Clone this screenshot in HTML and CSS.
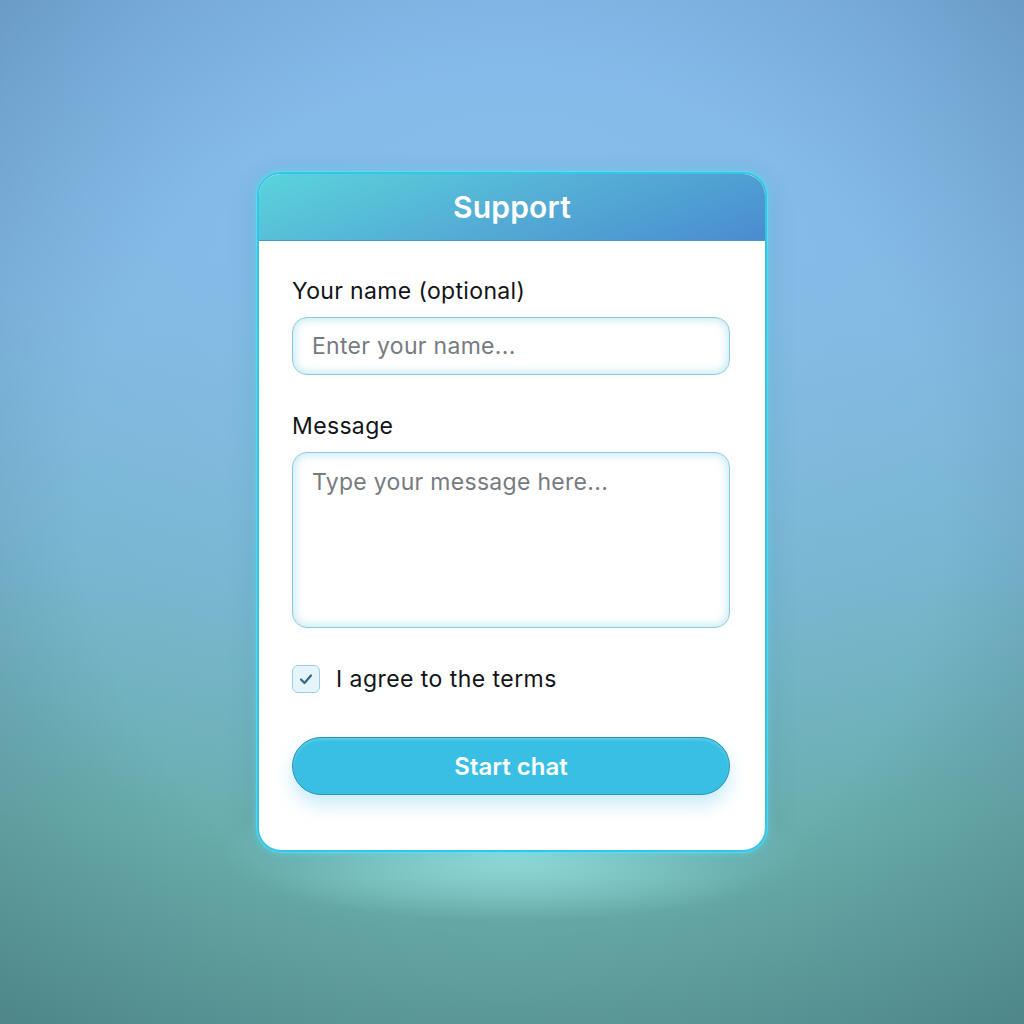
FILE: index.html
```html
<!DOCTYPE html>
<html>
<head>
<meta charset="utf-8">
<link rel="stylesheet" href="styles.css">
</head>
<body>
<div class="stage">
  <div class="card">
    <div class="header">Support</div>
    <div class="body">
      <label class="label">Your name (optional)</label>
      <div class="input">Enter your name...</div>
      <label class="label label-msg">Message</label>
      <div class="textarea">Type your message here...</div>
      <div class="check-row">
        <span class="checkbox">
          <svg width="18" height="18" viewBox="0 0 18 18"><path d="M4 9.5 L7.5 13 L14 5.5" fill="none" stroke="#2e6c86" stroke-width="2.2" stroke-linecap="round" stroke-linejoin="round"/></svg>
        </span>
        <span class="check-label">I agree to the terms</span>
      </div>
      <div class="button">Start chat</div>
    </div>
  </div>
</div>
</body>
</html>
```
FILE: styles.css
```css
* { box-sizing: border-box; }
html, body { margin: 0; padding: 0; }
body {
  width: 1024px;
  height: 1024px;
  overflow: hidden;
  font-family: Inter, "Noto Sans", sans-serif;
}
.stage {
  width: 1024px;
  height: 1024px;
  padding-top: 172px;
  display: flex;
  justify-content: center;
  align-items: flex-start;
  background:
    radial-gradient(ellipse 290px 70px at 512px 852px, rgba(160,235,232,0.95), rgba(160,235,232,0) 100%),
    radial-gradient(ellipse 650px 620px at 512px 300px, rgba(140,195,240,0.55), rgba(140,195,240,0) 100%),
    radial-gradient(ellipse 720px 720px at 512px 500px, rgba(0,0,0,0) 60%, rgba(20,50,80,0.22) 100%),
    linear-gradient(180deg, #80b6e6 0%, #80b8e2 30%, #76b4cc 55%, #6aaeac 80%, #5f9f9c 100%);
}
.card {
  width: 510px;
  height: 680px;
  border: 2px solid #34c6e6;
  border-radius: 24px;
  background: #ffffff;
  overflow: hidden;
  box-shadow: 0 0 0 1px rgba(90,225,245,0.6), 0 0 10px rgba(90,225,245,0.7), 0 10px 30px rgba(40,120,140,0.2);
}
.header {
  height: 67px;
  background: linear-gradient(160deg, #5ad4dc 0%, #55b2d6 45%, #4a8cd0 100%);
  color: #ffffff;
  font-size: 30px;
  font-weight: 600;
  letter-spacing: 0.2px;
  display: flex;
  align-items: center;
  justify-content: center;
  border-bottom: 1px solid #4a9acb;
}
.body {
  padding: 36px 33px 0 33px;
  display: flex;
  flex-direction: column;
}
.label {
  font-size: 23px;
  letter-spacing: 0.35px;
  line-height: 28px;
  color: #111418;
  margin-bottom: 12px;
}
.label-msg { margin-top: 37px; }
.input, .textarea {
  width: 438px;
  border: 1.5px solid #8ccbdc;
  border-radius: 15px;
  background: #ffffff;
  box-shadow: inset 0 0 8px 2px rgba(150,215,235,0.55);
  color: #777b80;
  font-size: 23px;
  letter-spacing: 0.3px;
  padding-left: 19px;
}
.input {
  height: 58px;
  display: flex;
  align-items: center;
}
.textarea {
  height: 176px;
  padding-top: 14px;
  line-height: 30px;
}
.check-row {
  margin-top: 37px;
  display: flex;
  align-items: center;
  gap: 16px;
}
.checkbox {
  width: 28px;
  height: 28px;
  border: 1.5px solid #9ccfe0;
  border-radius: 6px;
  background: #e6f5fb;
  display: flex;
  align-items: center;
  justify-content: center;
}
.check-label {
  font-size: 23px;
  letter-spacing: 0.45px;
  color: #111418;
}
.button {
  margin-top: 44px;
  width: 438px;
  height: 58px;
  border-radius: 29px;
  background: #38bfe3;
  border: 1.5px solid #2496b8;
  color: #ffffff;
  font-size: 24px;
  font-weight: 600;
  display: flex;
  align-items: center;
  justify-content: center;
  box-shadow: 0 10px 18px rgba(100,200,235,0.35), inset 0 2px 3px rgba(255,255,255,0.2);
}
```
